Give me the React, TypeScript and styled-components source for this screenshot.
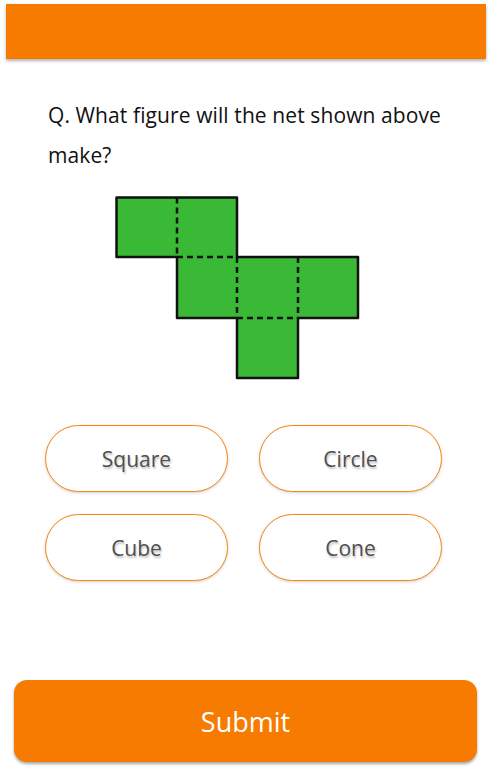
import React from "react";
import styled, { createGlobalStyle } from "styled-components";

const Global = createGlobalStyle`
  html, body { margin: 0; padding: 0; background: #ffffff; }
  body { font-family: "Open Sans", "Liberation Sans", sans-serif; }
`;

const Page = styled.div`
  width: 492px;
  height: 770px;
  display: flex;
  flex-direction: column;
  box-sizing: border-box;
  padding: 4px 6px 0;
`;

const Header = styled.div`
  height: 55px;
  background: #f77b00;
  box-shadow: 0 2px 3px rgba(0, 0, 0, 0.3);
`;

const Question = styled.p`
  margin: 36px 0 0 42px;
  font-family: "Open Sans", sans-serif;
  font-size: 21px;
  line-height: 40px;
  color: #111;
  letter-spacing: 0.1px;
  width: 410px;
`;

const NetWrap = styled.div`
  margin: 21px 0 0 109px;
  height: 186px;
`;

const Options = styled.div`
  display: grid;
  grid-template-columns: 183px 183px;
  column-gap: 31px;
  row-gap: 22px;
  margin: 43px 0 0 39px;
`;

const Option = styled.button`
  height: 67px;
  border: 1px solid #f7860f;
  border-radius: 34px;
  background: #fff;
  box-shadow: 0 1px 3px rgba(0, 0, 0, 0.18);
  font-family: "Open Sans", sans-serif;
  font-size: 21px;
  color: #4f4f4f;
  text-shadow: 1px 2px 2px rgba(0, 0, 0, 0.25);
  padding: 0;
`;

const Spacer = styled.div`
  flex: 1;
`;

const Submit = styled.button`
  margin: 0 9px 8px 8px;
  height: 82px;
  border: none;
  border-radius: 13px;
  background: #f77b00;
  color: #fff;
  font-family: "Open Sans", sans-serif;
  font-size: 27px;
  box-shadow: 0 2px 3px rgba(0, 0, 0, 0.35);
  padding: 0;
`;

const Net = () => (
  <svg width="252" height="186" viewBox="0 0 252 186">
    <g fill="#39b935" stroke="#111" strokeWidth="2.5" strokeLinejoin="round">
      <path d="M1.5 1.5 H122 V61 H243 V122 H183 V182 H122 V122 H62 V61 H1.5 Z" />
    </g>
    <g stroke="#111" strokeWidth="2.5" strokeDasharray="6 4" fill="none">
      <line x1="62" y1="1.5" x2="62" y2="61" />
      <line x1="62" y1="61" x2="122" y2="61" />
      <line x1="122" y1="61" x2="122" y2="122" />
      <line x1="183" y1="61" x2="183" y2="122" />
      <line x1="122" y1="122" x2="183" y2="122" />
    </g>
  </svg>
);

export default function App() {
  return (
    <>
      <Global />
      <Page>
        <Header />
        <Question>Q. What figure will the net shown above make?</Question>
        <NetWrap>
          <Net />
        </NetWrap>
        <Options>
          <Option>Square</Option>
          <Option>Circle</Option>
          <Option>Cube</Option>
          <Option>Cone</Option>
        </Options>
        <Spacer />
        <Submit>Submit</Submit>
      </Page>
    </>
  );
}
